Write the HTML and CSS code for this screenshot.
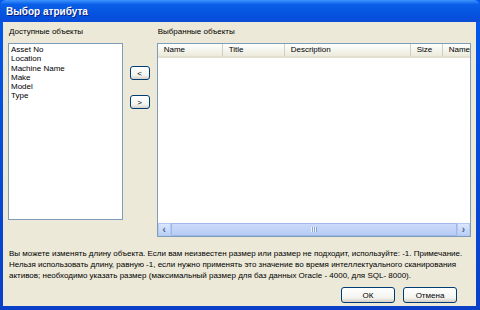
FILE: index.html
```html
<!DOCTYPE html>
<html>
<head>
    <meta charset="UTF-8" />
    <title>Выбор атрибута</title>
    <link rel="stylesheet" href="styles.css">
</head>
<body>
    <div class="window">
        <div class="titlebar">Выбор атрибута</div>
        <div class="client">
            <div class="lists">
                <div class="pane left">
                    <div class="caption">Доступные объекты</div>
                    <div class="listbox">
                        <div>Asset No</div>
                        <div>Location</div>
                        <div>Machine Name</div>
                        <div>Make</div>
                        <div>Model</div>
                        <div>Type</div>
                    </div>
                </div>
                <div class="movers">
                    <button class="btn small">&lt;</button>
                    <button class="btn small">&gt;</button>
                </div>
                <div class="pane right">
                    <div class="caption">Выбранные объекты</div>
                    <div class="listview">
                        <div class="header">
                            <div class="col c1">Name</div>
                            <div class="col c2">Title</div>
                            <div class="col c3">Description</div>
                            <div class="col c4">Size</div>
                            <div class="col c5">Name</div>
                        </div>
                        <div class="rows"></div>
                        <div class="hscroll">
                            <div class="arrow">&lsaquo;</div>
                            <div class="thumb"><span class="grip"></span></div>
                            <div class="arrow">&rsaquo;</div>
                        </div>
                    </div>
                </div>
            </div>
            <p class="note">Вы можете изменять длину объекта. Если вам неизвестен размер или размер не подходит, используйте: -1. Примечание.<br>Нельзя использовать длину, равную -1, если нужно применять это значение во время интеллектуального сканирования<br>активов; необходимо указать размер (максимальный размер для баз данных Oracle - 4000, для SQL- 8000).</p>
            <div class="actions">
                <button class="btn">ОК</button>
                <button class="btn">Отмена</button>
            </div>
        </div>
    </div>
</body>
</html>
```
FILE: styles.css
```css
body {
    margin: 0;
    background-color: #0a246a;
    font-family: "Liberation Sans", Arial, sans-serif;
    font-size: 8px;
    color: #000;
}

.window {
    width: 480px;
    height: 310px;
    box-sizing: border-box;
    display: flex;
    flex-direction: column;
    background: linear-gradient(#0058ee, #0a3fc8);
    padding: 0 4px 4px 3px;
}

.titlebar {
    height: 22px;
    line-height: 23px;
    color: #fff;
    font-family: "Liberation Sans", Arial, sans-serif;
    font-weight: bold;
    font-size: 10px;
    text-shadow: 1px 1px 0 #0a1e80;
    background: linear-gradient(#3d95ff 0%, #0a5fe8 20%, #0454e0 60%, #0a4cd8 100%);
    margin: 0 -4px 0 -3px;
    padding-left: 6px;
    border-radius: 6px 6px 0 0;
}

.client {
    flex: 1;
    background-color: #ece9d8;
    padding: 4px 5px 0 5px;
    display: flex;
    flex-direction: column;
}

.lists {
    display: flex;
    height: 210px;
}

.caption {
    height: 17px;
    line-height: 12px;
    padding-left: 1px;
}

.pane.left {
    width: 115px;
}

.listbox {
    height: 173px;
    background: #fff;
    border: 1px solid #7f9db9;
    padding: 1px 2px;
    line-height: 9.3px;
}

.movers {
    width: 34px;
    display: flex;
    flex-direction: column;
    align-items: center;
    padding-top: 40px;
    gap: 15px;
}

.btn {
    font-family: "Liberation Sans", Arial, sans-serif;
    font-size: 8px;
    width: 54px;
    height: 16px;
    padding: 0;
    border: 1px solid #003c74;
    border-radius: 3px;
    background: linear-gradient(#ffffff, #f3f3ef 70%, #d6d0c5);
    color: #000;
}

.btn.small {
    width: 20px;
    height: 14px;
    font-size: 8px;
}

.pane.right {
    flex: 1;
}

.listview {
    height: 192px;
    background: #fff;
    border: 1px solid #7f9db9;
    display: flex;
    flex-direction: column;
}

.header {
    display: flex;
    height: 12px;
    line-height: 12px;
    background: linear-gradient(#fff, #ebeadb);
    border-bottom: 2px solid #e2dfd0;
}

.col {
    padding-left: 6px;
    border-right: 1px solid #d0cfc0;
    box-sizing: border-box;
}

.c1 { width: 65px; }
.c2 { width: 62px; }
.c3 { width: 126px; }
.c4 { width: 32px; }
.c5 { flex: 1; border-right: none; }

.rows {
    flex: 1;
}

.hscroll {
    height: 13px;
    display: flex;
    background: #f3f1ec;
}

.arrow {
    width: 13px;
    line-height: 12px;
    text-align: center;
    font-size: 10px;
    font-weight: bold;
    color: #4d6185;
    background: linear-gradient(#dbe7fe, #b9cff7);
    border: 1px solid #b5c8f0;
    box-sizing: border-box;
}

.thumb {
    flex: 1;
    background: linear-gradient(#cbdaf9, #b7ccf5);
    border: 1px solid #9fb8ea;
    display: flex;
    align-items: center;
    justify-content: center;
}

.grip {
    width: 6px;
    height: 5px;
    background: repeating-linear-gradient(90deg, #eef4fe 0 1px, #8ca5d8 1px 2px);
}

.note {
    margin: 12px 0 0 0;
    padding-left: 1px;
    font-size: 8px;
    line-height: 11px;
    white-space: nowrap;
}

.actions {
    display: flex;
    justify-content: flex-end;
    gap: 8px;
    margin-top: 6px;
    padding-right: 14px;
}
```
